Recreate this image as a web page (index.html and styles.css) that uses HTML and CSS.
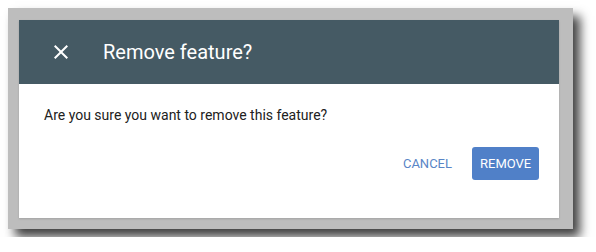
FILE: index.html
```html
<!DOCTYPE html>
<html>
<head>
<meta charset="utf-8">
<link rel="stylesheet" href="styles.css">
</head>
<body>
<div class="frame">
  <div class="dialog">
    <div class="header">
      <span class="close">
        <svg width="24" height="24" viewBox="0 0 24 24"><path d="M19 6.41 17.59 5 12 10.59 6.41 5 5 6.41 10.59 12 5 17.59 6.41 19 12 13.41 17.59 19 19 17.59 13.41 12z" fill="#fff"/></svg>
      </span>
      <span class="title">Remove feature?</span>
    </div>
    <div class="body">Are you sure you want to remove this feature?</div>
    <div class="actions">
      <button class="btn btn-text">CANCEL</button>
      <button class="btn btn-primary">REMOVE</button>
    </div>
  </div>
</div>
</body>
</html>
```
FILE: styles.css
```css
html, body {
  margin: 0;
  background: #fff;
}
body {
  padding: 8px;
  font-family: Roboto, "Liberation Sans", sans-serif;
}
.frame {
  width: 565px;
  height: 221px;
  box-sizing: border-box;
  background: #bdbdbd;
  padding: 12px 14px 11px 11px;
  box-shadow: 7px 8px 10px rgba(0, 0, 0, 0.75);
}
.dialog {
  background: #fff;
  height: 198px;
  display: flex;
  flex-direction: column;
  box-shadow: 0 1px 2px rgba(0,0,0,0.15);
}
.header {
  height: 64px;
  background: #455a64;
  display: flex;
  align-items: center;
  padding-left: 30px;
  color: #fff;
}
.close {
  width: 24px;
  height: 24px;
  display: flex;
}
.title {
  margin-left: 30px;
  font-size: 20px;
  line-height: 24px;
  padding-bottom: 1px;
}
.body {
  padding: 21px 0 0 25px;
  font-size: 14px;
  line-height: 20px;
  color: #212121;
}
.actions {
  display: flex;
  justify-content: flex-end;
  align-items: center;
  gap: 12px;
  padding: 22px 20px 0 0;
}
.btn {
  font-family: Roboto, "Liberation Sans", sans-serif;
  font-size: 13px;
  height: 33px;
  padding: 0 8px;
  border: none;
  border-radius: 3px;
  background: transparent;
  cursor: pointer;
}
.btn-text {
  color: #5985c6;
}
.btn-primary {
  background: #5080c8;
  color: #fff;
  width: 67px;
}
```
